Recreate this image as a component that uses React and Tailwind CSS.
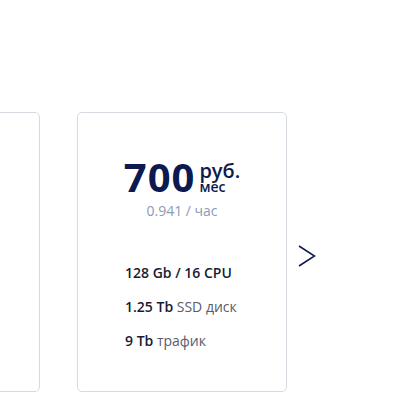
export default function App() {
  const font = { fontFamily: '"Open Sans", "Noto Sans", sans-serif' };
  return (
    <div className="w-[404px] h-[420px] bg-white overflow-hidden" style={font}>
      <div className="flex items-start pt-[112px] ml-[-171px]">
        <div className="w-[211px] h-[280px] shrink-0 rounded-[5px] border border-[#d6dbe2] bg-white" />
        <div className="w-[210px] h-[280px] shrink-0 ml-[37px] rounded-[5px] border border-[#d6dbe2] bg-white flex flex-col items-center">
          <div className="flex items-start mt-[40px] text-[#0c1a4f]">
            <span className="text-[40px] font-bold leading-[48px] tracking-[1px]">700</span>
            <div className="flex flex-col ml-[4px] mt-[9px]">
              <span className="text-[20px] font-semibold leading-[18px]">руб.</span>
              <span className="text-[14px] font-semibold leading-[14px]">мес</span>
            </div>
          </div>
          <div className="text-[14px] text-[#8b9ab7] leading-[18px] mt-[1px]">0.941 / час</div>
          <div className="self-start ml-[47px] mt-[44px] flex flex-col gap-[16px] text-[14px] leading-[18px] text-[#161c33]">
            <div className="font-semibold">128 Gb / 16 CPU</div>
            <div><span className="font-semibold">1.25 Tb</span> <span className="text-[#575c6b]">SSD диск</span></div>
            <div><span className="font-semibold">9 Tb</span> <span className="text-[#575c6b]">трафик</span></div>
          </div>
        </div>
        <div className="ml-[11px] mt-[133px]">
          <svg width="18" height="22" viewBox="0 0 18 22" fill="none">
            <polyline points="1,1 16.5,11 1,21" stroke="#0c1a4f" strokeWidth="1.5" />
          </svg>
        </div>
      </div>
    </div>
  );
}
